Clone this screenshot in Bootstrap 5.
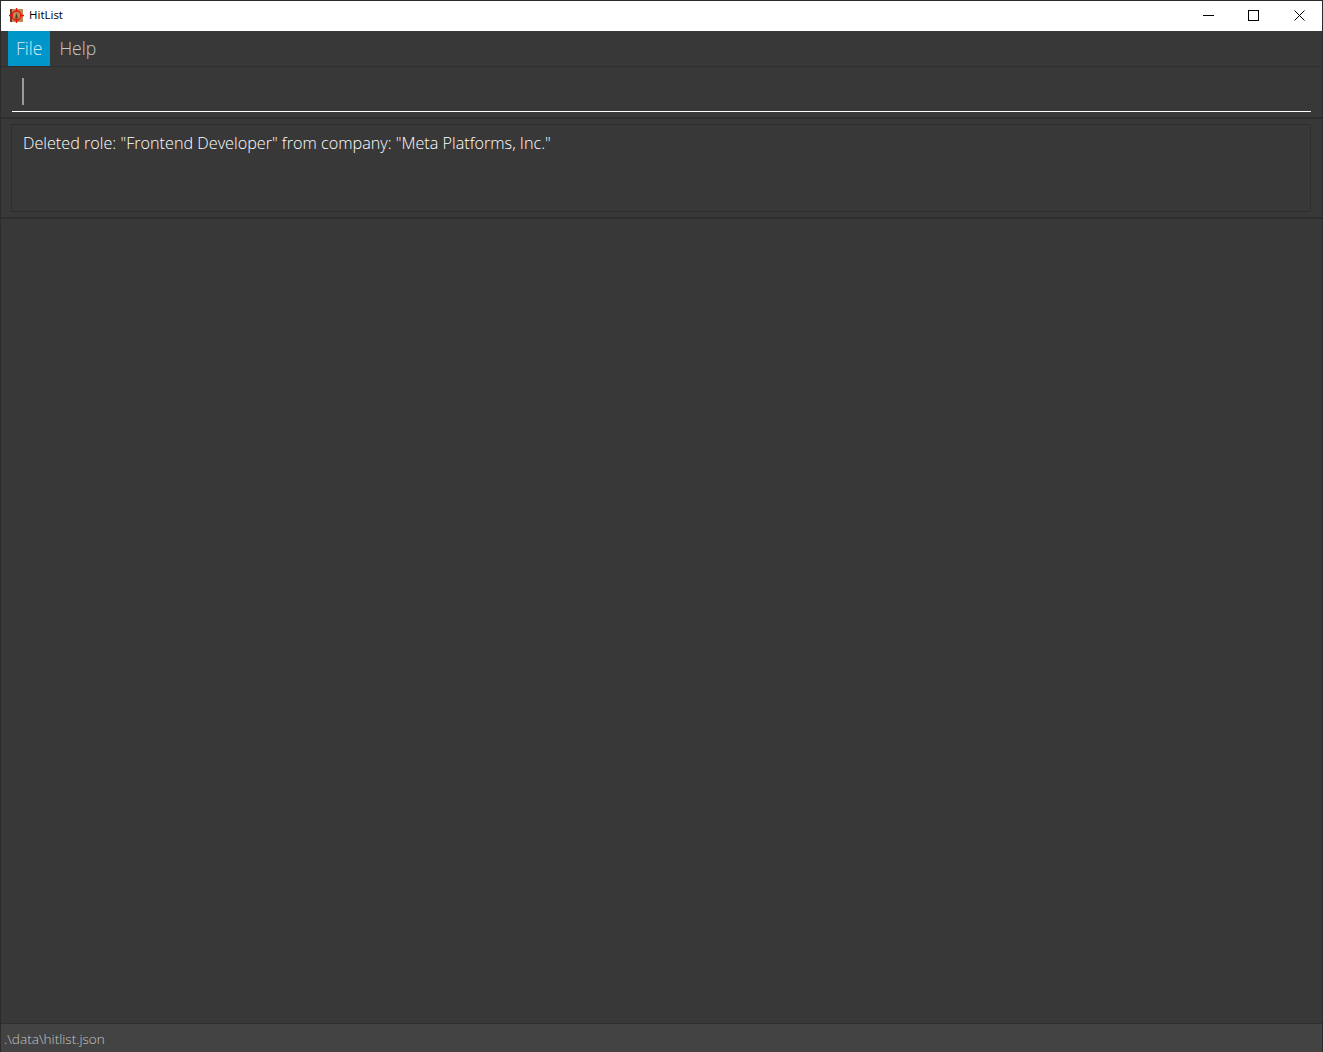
<!DOCTYPE html>
<html lang="en">
<head>
  <meta charset="UTF-8" />
  <meta name="viewport" content="width=device-width, initial-scale=1.0"/>
  <title>HitList</title>
  <link href="https://cdn.jsdelivr.net/npm/bootstrap@5.3.0/dist/css/bootstrap.min.css" rel="stylesheet" />
  <style>
    html, body {
      height: 100%;
    }
    body {
      background-color: #383838;
      font-family: "Open Sans", "Liberation Sans", sans-serif;
      font-weight: 300;
      color: #fff;
      overflow: hidden;
    }
    .app-window {
      height: 1052px;
      border: solid #2b2b2b;
      border-width: 1px 1px 0 1px;
    }
    .title-bar {
      height: 30px;
      background-color: #fff;
      color: #000;
      font-weight: 400;
      font-size: 11.5px;
      padding: 0 0 2px 8px;
    }
    .title-text {
      margin-left: 5px;
    }
    .win-btn {
      width: 45.5px;
      height: 28px;
    }
    .menu-row {
      height: 36px;
      padding-left: 7px;
      border-bottom: 1px solid #2e2e2e;
      font-size: 17.6px;
      color: #c9c9c9;
    }
    .menu-entry {
      padding: 0 8px 0 9px;
      height: 35px;
    }
    .menu-active {
      padding: 0 8px;
      background-color: #0096c9;
      color: #d3e9f2;
    }
    .command-pane {
      height: 52px;
      padding: 0 11px;
      border-bottom: 2px solid #2e2e2e;
    }
    .command-field {
      height: 45px;
      border-bottom: 1px solid #fff;
      padding: 11px 0 0 10px;
    }
    .caret-bar {
      width: 2px;
      height: 27px;
      background-color: #9a9a9a;
    }
    .result-pane {
      height: 100px;
      padding: 5px 11px 5px 10px;
      border-bottom: 2px solid #2e2e2e;
    }
    .result-box {
      height: 88px;
      border: 1px solid #2e2e2e;
      padding: 6px 11px;
      font-size: 16.2px;
      color: #fff;
    }
    .status-row {
      height: 29px;
      background-color: #434343;
      border-top: 1px solid #2e2e2e;
      font-size: 13.6px;
      padding: 2px 0 0 3px;
      color: #c6c6c6;
    }
  </style>
</head>
<body>
  <div class="app-window d-flex flex-column">
    <div class="title-bar d-flex align-items-center flex-shrink-0">
      <svg width="15" height="15" viewBox="0 0 15 15">
        <rect x="1" y="1" width="13" height="13" fill="#b98a52"/>
        <rect x="1" y="1" width="2" height="13" fill="#7a3a2a"/>
        <path d="M6 10.5L7.5 5L9 10.5Z" fill="#5a3a20"/>
        <circle cx="7.5" cy="7.5" r="4.5" fill="none" stroke="#ee1111" stroke-width="1.3"/>
        <path d="M7.5 0V4M7.5 11V15M0 7.5H4M11 7.5H15" stroke="#ee1111" stroke-width="1.3"/>
      </svg>
      <span class="title-text">HitList</span>
      <div class="d-flex ms-auto">
        <div class="win-btn d-flex align-items-center justify-content-center">
          <svg width="11" height="11" viewBox="0 0 11 11"><path d="M0 5.5H11" stroke="#000" fill="none"/></svg>
        </div>
        <div class="win-btn d-flex align-items-center justify-content-center">
          <svg width="11" height="11" viewBox="0 0 11 11"><rect x=".5" y=".5" width="10" height="10" stroke="#000" fill="none"/></svg>
        </div>
        <div class="win-btn d-flex align-items-center justify-content-center">
          <svg width="11" height="11" viewBox="0 0 11 11"><path d="M.5 .5L10.5 10.5M10.5 .5L.5 10.5" stroke="#000" fill="none"/></svg>
        </div>
      </div>
    </div>

    <div class="menu-row d-flex flex-shrink-0">
      <div class="menu-entry menu-active d-flex align-items-center">File</div>
      <div class="menu-entry d-flex align-items-center">Help</div>
    </div>

    <div class="command-pane flex-shrink-0">
      <div class="command-field"><div class="caret-bar"></div></div>
    </div>

    <div class="result-pane flex-shrink-0">
      <div class="result-box">Deleted role: "Frontend Developer" from company: "Meta Platforms, Inc."</div>
    </div>

    <div class="flex-grow-1"></div>

    <div class="status-row d-flex align-items-center flex-shrink-0">.\data\hitlist.json</div>
  </div>
</body>
</html>
